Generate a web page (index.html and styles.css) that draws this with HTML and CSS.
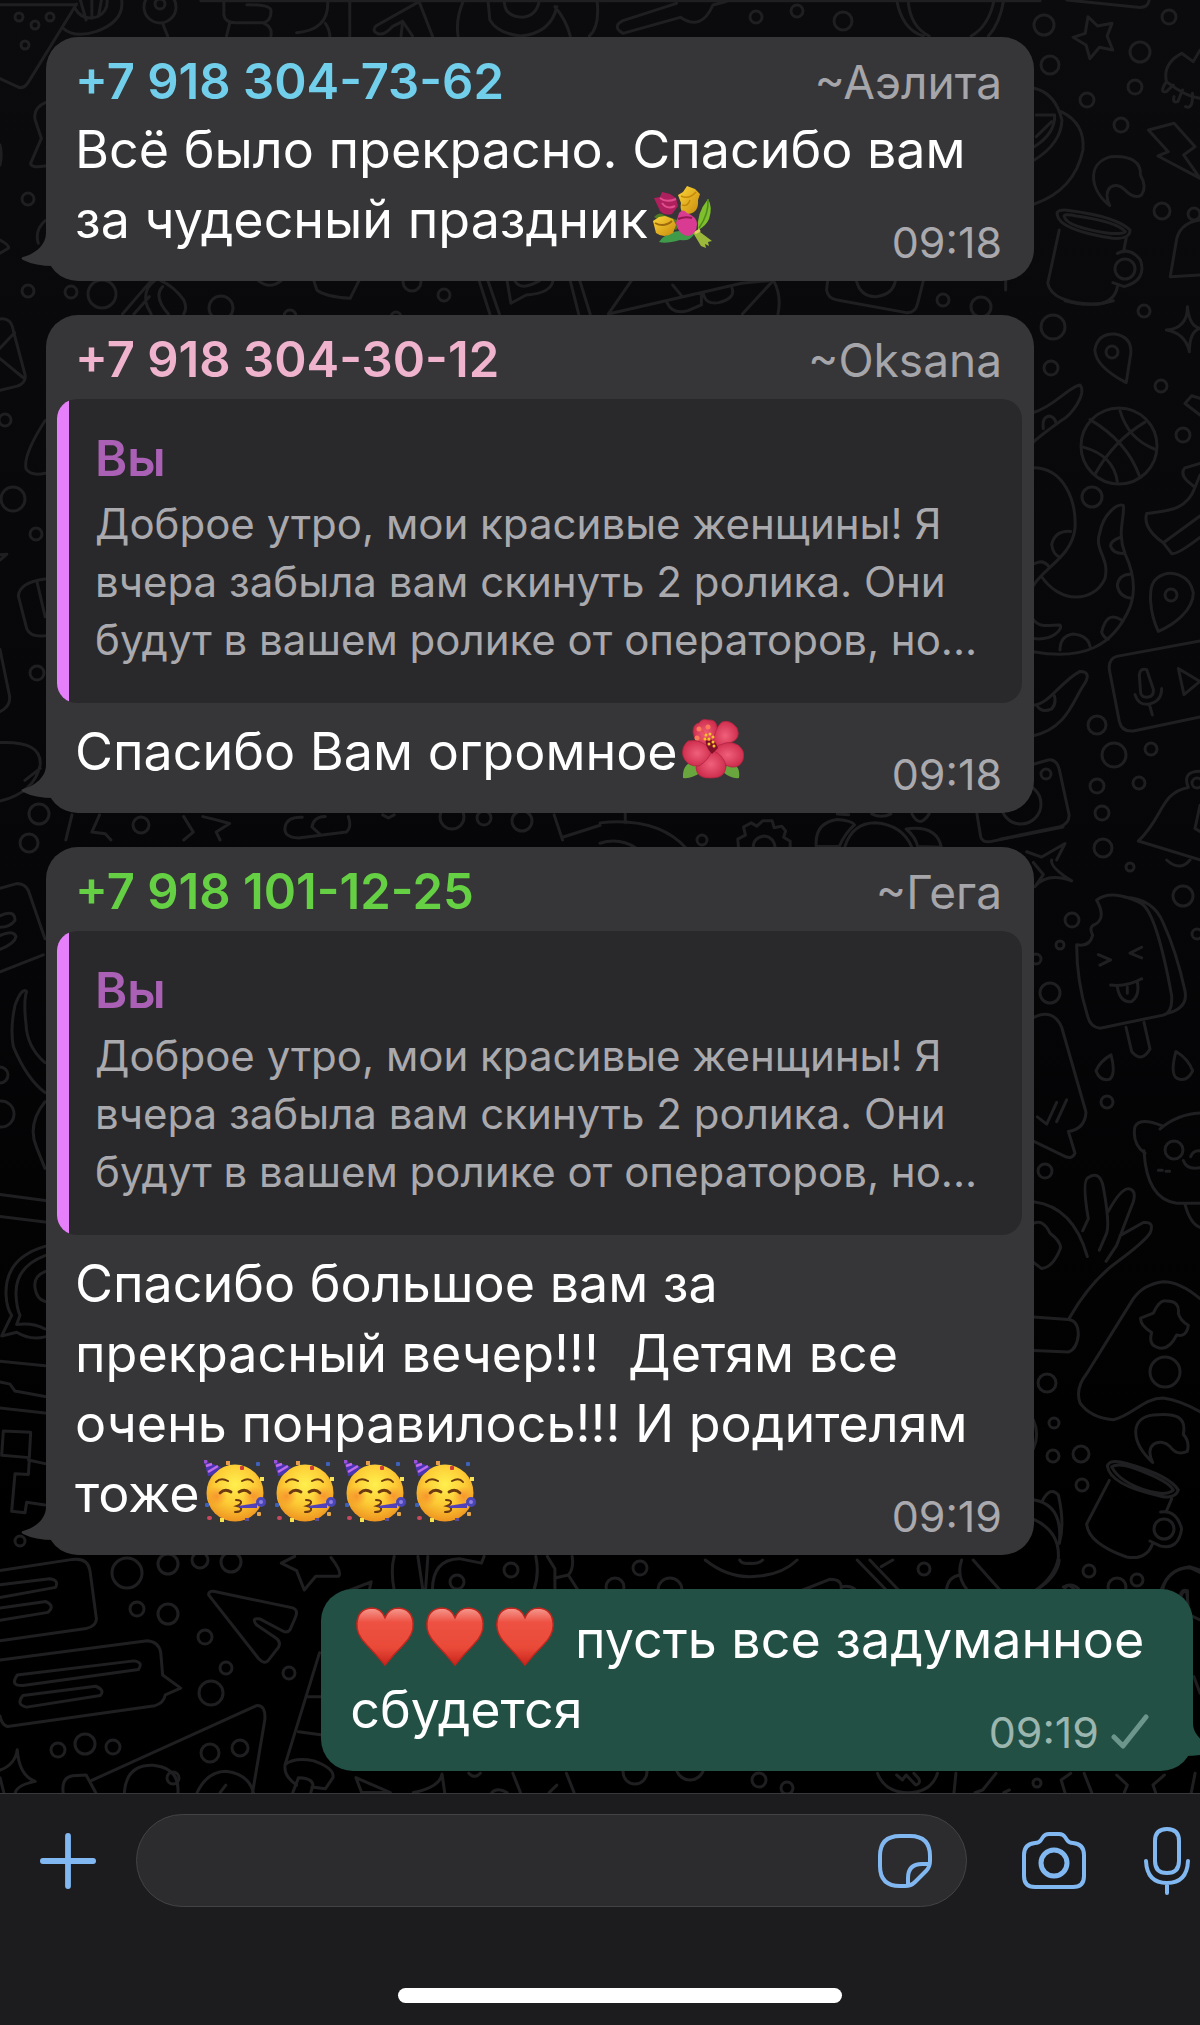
FILE: index.html
```html
<!DOCTYPE html>
<html lang="ru">
<head>
  <meta charset="UTF-8" />
  <meta name="viewport" content="width=device-width, initial-scale=1" />
  <title>Чат</title>
  <link rel="stylesheet" href="styles.css">
</head>
<body>
  <!-- shared emoji and bubble tail -->
  <svg class="defs" aria-hidden="true">
    <defs>
      <radialGradient id="face" cx="50%" cy="35%" r="65%">
        <stop offset="0" stop-color="#fff04e" />
        <stop offset="0.55" stop-color="#fdcb35" />
        <stop offset="1" stop-color="#ee9420" />
      </radialGradient>
      <radialGradient id="blush">
        <stop offset="0" stop-color="#f4752b" stop-opacity="0.6" />
        <stop offset="1" stop-color="#f4752b" stop-opacity="0" />
      </radialGradient>
      <linearGradient id="heart-fill" x1="0" y1="0" x2="0" y2="1">
        <stop offset="0" stop-color="#f59a90" />
        <stop offset="0.25" stop-color="#ee5142" />
        <stop offset="0.7" stop-color="#e94a38" />
        <stop offset="1" stop-color="#c9241c" />
      </linearGradient>
      <radialGradient id="petal">
        <stop offset="0" stop-color="#f0607a" />
        <stop offset="1" stop-color="#cf2f4e" />
      </radialGradient>
      <linearGradient id="yellow-rose" x1="0" y1="0" x2="1" y2="1">
        <stop offset="0" stop-color="#fbd53a" />
        <stop offset="1" stop-color="#c98a0c" />
      </linearGradient>
    </defs>
    <symbol id="tail" viewBox="0 0 33 34">
      <path d="M25 0C25 12 14 21 2 24Q-1 25 2 27Q14 33 33 33V0Z" />
    </symbol>
    <symbol id="party" viewBox="0 0 62 62">
      <circle cx="31" cy="33" r="28.5" fill="url(#face)" />
      <circle cx="13" cy="36" r="10" fill="url(#blush)" />
      <circle cx="49" cy="36" r="10" fill="url(#blush)" />
      <path d="M0 1L4 16Q10 16 17 7Z" fill="#4a35b5" />
      <path d="M2 6L8 4M4 12L14 6" stroke="#c06be8" stroke-width="2.4" />
      <circle cx="1.5" cy="1.5" r="2" fill="#9b4fd6" />
      <g fill="none" stroke="#6b3a10" stroke-width="2" stroke-linecap="round">
        <path d="M12 22Q17 17 24 21" />
        <path d="M38 21Q45 17 49 22" />
        <path d="M16 33Q21 28 27 32M35 32Q41 28 46 33" stroke-width="2.8" />
        <path d="M32 40Q38 40 37 43Q36 45 33 46Q38 47 37 50Q36 52 31 52" />
      </g>
      <path d="M34 46L53 43V48L36 48Z" fill="#5240b8" />
      <circle cx="57" cy="42" r="3.5" fill="#8f7fe0" stroke="#4b46b8" stroke-width="3" />
      <rect x="22" y="1" width="4" height="4" fill="#e89b4a" />
      <rect x="36" y="6" width="4" height="4" rx="1" fill="#d23d3a" />
      <rect x="52" y="2" width="4" height="4" rx="1" fill="#3e62b8" />
      <rect x="56" y="17" width="4" height="4" fill="#f7e35a" />
      <rect x="1" y="43" width="4" height="4" rx="1" fill="#3e62b8" />
      <rect x="3" y="56" width="5" height="4" rx="2" fill="#c9475f" />
      <rect x="16" y="58" width="4" height="4" fill="#f5e24e" />
      <rect x="41" y="58" width="4" height="3" fill="#5a4a9a" />
      <rect x="53" y="52" width="4" height="4" rx="1" fill="#e3a64a" />
    </symbol>
    <symbol id="heart" viewBox="-1 -1 64 64">
      <path d="M31 60Q22 49 12 39Q1 28 2 17Q3 2 17 1Q27 1 31 11Q35 1 45 1Q59 2 60 17Q61 28 50 39Q40 49 31 60Z" fill="url(#heart-fill)" stroke="#c0261e" stroke-width="1.5" />
    </symbol>
    <symbol id="hibiscus" viewBox="0 0 62 62">
      <path d="M1 60Q0 43 16 44L19 54Q10 61 1 60ZM57 60Q59 46 46 45L41 54Q49 61 57 60Z" fill="#6aa63e" />
      <g fill="url(#petal)" stroke="#b32342" stroke-width="0.8">
        <path d="M30 30Q12 27 11 14Q11 6 17 5Q20 0 26 2Q34 1 35 9Q37 20 30 30Z" />
        <path d="M30 32Q32 10 40 4Q48 1 55 10Q59 20 50 24Q40 27 30 32Z" />
        <path d="M30 32Q45 20 56 27Q64 33 61 42Q58 50 49 49Q36 46 30 32Z" />
        <path d="M30 32Q43 38 44 49Q43 60 30 60Q15 61 14 50Q15 39 30 32Z" />
        <path d="M30 32Q27 42 17 48Q5 49 1 38Q-1 29 6 23Q18 20 30 32Z" />
      </g>
      <path d="M30 36Q22 28 24 20Q34 22 36 30Z" fill="#7f1029" />
      <path d="M20 12L27 22L15 20" stroke="#e5544a" stroke-width="1.5" fill="none" />
      <g fill="#f6c22c">
        <circle cx="24" cy="17" r="1.5" /><circle cx="28" cy="16" r="1.5" /><circle cx="31" cy="19" r="1.5" />
        <circle cx="23" cy="21" r="1.5" /><circle cx="27" cy="21" r="1.5" /><circle cx="31" cy="24" r="1.5" />
        <circle cx="27" cy="26" r="1.5" /><circle cx="32" cy="28" r="1.5" />
      </g>
      <g fill="#fa7a5c"><circle cx="17" cy="11" r="2.5" /><circle cx="26" cy="9" r="2.5" /><circle cx="15" cy="20" r="2.5" /></g>
    </symbol>
    <symbol id="bouquet" viewBox="0 0 62 62">
      <path d="M56 13Q61 21 57 33Q54 40 46 44Q44 28 56 13Z" fill="#7fbf2b" />
      <path d="M56 13Q57 28 47 42" stroke="#4d8a1f" stroke-width="1.5" fill="none" />
      <path d="M7 56Q14 46 27 45L43 47Q38 56 28 54Q14 58 7 56Z" fill="#3f9a4a" />
      <path d="M2 31Q7 25 12 29L30 36L24 44Z" fill="#4e7a22" />
      <path d="M40 45L48 46L60 55L56 56L57 60L53 58L54 62L49 60Z" fill="#9bb83a" />
      <path d="M43 47L48 44" stroke="#e3d35e" stroke-width="3" />
      <path d="M2 12L8 11L10 6L18 8L24 12L26 20L20 28Q12 30 8 25Z" fill="#ae1f5e" />
      <path d="M8 12Q14 17 24 13M10 17Q15 24 23 20" stroke="#e04e8c" stroke-width="2" fill="none" />
      <path d="M26 9L31 6L35 0L43 3L48 8L46 14Q47 27 36 28Q27 28 29 17Z" fill="url(#yellow-rose)" />
      <path d="M29 10Q37 14 44 6M30 19Q36 21 38 14" stroke="#c4880a" stroke-width="1.5" fill="none" />
      <path d="M1 35L7 31L13 30L21 33L24 39L21 47Q12 53 4 47Z" fill="url(#yellow-rose)" />
      <path d="M3 37Q12 42 20 35" stroke="#9d6a0c" stroke-width="2" fill="none" />
      <path d="M27 27Q31 22 35 27Q45 31 45 38Q45 48 36 50Q26 49 24 37Z" fill="#d93b92" />
      <path d="M26 33Q33 30 40 32" stroke="#92184f" stroke-width="2" fill="none" />
    </symbol>
  </svg>

  <main class="chat">
    <!-- wallpaper: groups are drawn tile by tile, each in its own scale -->
    <svg class="wallpaper" viewBox="0 0 1200 1793" preserveAspectRatio="xMidYMin slice" aria-hidden="true">
      <g>
        <circle cx="19" cy="17" r="4" /><circle cx="35" cy="25" r="4" /><circle cx="50" cy="17" r="4" /><circle cx="25" cy="45" r="4" />
        <circle cx="160" cy="4" r="5" /><circle cx="160" cy="7" r="16" /><circle cx="28" cy="199" r="6" /><circle cx="28" cy="291" r="6" />
        <circle cx="71" cy="292" r="6" /><circle cx="102" cy="294" r="14" /><circle cx="221" cy="308" r="12" /><circle cx="444" cy="295" r="6" />
        <circle cx="290" cy="316" r="6" /><circle cx="396" cy="317" r="5" /><circle cx="412" cy="282" r="9" /><circle cx="756" cy="17" r="6" />
        <circle cx="797" cy="11" r="6" /><circle cx="843" cy="21" r="9" /><circle cx="1044" cy="25" r="10" /><circle cx="1050" cy="65" r="9" />
        <circle cx="1140" cy="52" r="10" /><circle cx="1135" cy="87" r="7" /><circle cx="1169" cy="17" r="7" /><circle cx="1087" cy="100" r="7" />
        <circle cx="1121" cy="125" r="7" /><circle cx="1162" cy="211" r="8" /><circle cx="1194" cy="214" r="6" /><circle cx="1144" cy="311" r="6" />
        <circle cx="1053" cy="327" r="12" /><circle cx="943" cy="300" r="6" /><circle cx="981" cy="307" r="10" /><circle cx="1051" cy="368" r="7" />
        <circle cx="1161" cy="386" r="6" /><circle cx="1112" cy="352" r="6" /><circle cx="1125" cy="269" r="10" />
        <circle cx="1092" cy="497" r="10" /><circle cx="1183" cy="435" r="7" /><circle cx="1171" cy="595" r="6" /><circle cx="1097" cy="725" r="9" />
        <circle cx="1114" cy="755" r="12" /><circle cx="1151" cy="749" r="6" /><circle cx="1139" cy="783" r="6" /><circle cx="1097" cy="786" r="7" />
        <circle cx="1102" cy="813" r="7" /><circle cx="1103" cy="848" r="9" /><circle cx="1119" cy="446" r="38" /><circle cx="1046" cy="774" r="5" />
        <circle cx="1021" cy="804" r="20" /><circle cx="1197" cy="783" r="5" /><circle cx="1072" cy="920" r="7" /><circle cx="1060" cy="945" r="4" />
        <circle cx="1130" cy="867" r="4" /><circle cx="1183" cy="896" r="10" /><circle cx="1197" cy="934" r="5" /><circle cx="1050" cy="993" r="10" />
        <circle cx="1036" cy="959" r="5" /><circle cx="1107" cy="1102" r="6" /><circle cx="1045" cy="1171" r="7" /><circle cx="1047" cy="1383" r="9" />
        <circle cx="1054" cy="1423" r="5" /><circle cx="1081" cy="1454" r="8" /><circle cx="1053" cy="1456" r="6" /><circle cx="1082" cy="1485" r="6" />
        <circle cx="1165" cy="1372" r="15" /><circle cx="1164" cy="1529" r="10" /><circle cx="1089" cy="1571" r="6" /><circle cx="1137" cy="1580" r="6" />
        <circle cx="1117" cy="1587" r="9" /><circle cx="1174" cy="1150" r="9" /><circle cx="5" cy="420" r="6" /><circle cx="13" cy="499" r="12" />
        <circle cx="36" cy="534" r="6" /><circle cx="37" cy="673" r="7" /><circle cx="39" cy="814" r="10" /><circle cx="141" cy="825" r="8" />
        <circle cx="452" cy="817" r="12" /><circle cx="484" cy="818" r="7" /><circle cx="522" cy="821" r="10" /><circle cx="29" cy="843" r="9" />
        <circle cx="702" cy="840" r="5" /><circle cx="0" cy="1075" r="8" /><circle cx="1" cy="1114" r="13" /><circle cx="20" cy="1541" r="5" />
        <circle cx="127" cy="1573" r="15" /><circle cx="168" cy="1564" r="10" /><circle cx="200" cy="1560" r="8" /><circle cx="231" cy="1562" r="10" />
        <circle cx="137" cy="1609" r="7" /><circle cx="168" cy="1614" r="10" /><circle cx="205" cy="1637" r="7" /><circle cx="226" cy="1668" r="6" />
        <circle cx="211" cy="1693" r="12" /><circle cx="289" cy="1673" r="6" /><circle cx="58" cy="1750" r="7" /><circle cx="85" cy="1744" r="10" />
        <circle cx="113" cy="1747" r="7" /><circle cx="210" cy="1753" r="9" /><circle cx="240" cy="1748" r="8" /><circle cx="457" cy="1582" r="7" />
        <circle cx="511" cy="1570" r="7" /><circle cx="173" cy="1778" r="6" /><circle cx="640" cy="1568" r="7" /><circle cx="615" cy="1587" r="9" />
        <circle cx="670" cy="1590" r="12" /><circle cx="924" cy="1569" r="6" /><circle cx="1037" cy="1783" r="4" /><circle cx="759" cy="1780" r="7" />
        <circle cx="787" cy="1788" r="6" /><circle cx="635" cy="1772" r="12" /><circle cx="690" cy="1766" r="14" />
      </g>
      <g transform="scale(0.3827 0.3333)">
        <path d="M0 14H198M200 12L75 245Q62 270 45 260L0 236M196 25Q215 65 255 50Q282 35 280 0M210 0L225 60M240 0L240 55M265 0L258 45M165 85Q195 115 250 95Q325 65 318 0" />
        <path d="M425 70L438 108M585 0V45Q588 68 615 68H690Q710 60 708 30Q705 14 645 14M600 70L592 108M690 70Q712 80 708 108M856 0Q862 90 775 98M914 0V108M850 70Q860 85 862 108M1095 5L982 78Q970 95 990 102Q1005 105 1025 80L1052 64L1048 108M1052 64L1078 108M1095 5L1130 108M1210 5Q1190 60 1197 108M1275 0L1280 60Q1300 100 1360 108Q1440 100 1455 20M1318 8Q1320 50 1365 52Q1400 48 1408 8M1450 20Q1480 60 1490 108M1540 108Q1568 80 1560 0M525 2H1568" />
        <path d="M118 308Q85 325 92 360L108 415L80 490Q80 505 118 498M0 435Q6 465 0 495M118 662Q90 690 100 730M0 720Q25 735 22 745L0 760" />
        <path d="M395 842L320 942M350 942L390 890M405 842Q370 870 385 920L395 942M420 842Q455 860 480 900Q490 925 480 942M425 860Q400 890 440 942M675 842Q705 870 735 842M820 842L828 870Q850 890 915 895L938 842M1252 842L1280 942M1275 842L1305 942M1325 842L1335 910L1375 885Q1440 880 1445 842M1490 842L1512 942M1515 842L1542 942M1345 842Q1360 875 1410 842" />
      </g>
      <g transform="translate(600 0) scale(0.3827 0.3333)">
        <path d="M0 2H1150M1220 0L1405 22Q1432 25 1435 0M200 10L60 62Q30 80 60 100L210 52Q265 95 295 15L330 5M775 0Q790 90 845 108M805 0Q810 80 860 108M1030 0Q1015 80 970 108M1055 0Q1045 70 1015 108" />
        <path d="M1275 50L1300 78L1338 70L1325 108L1340 150L1305 142L1280 176L1270 135L1236 112L1268 100Z" />
        <path d="M1568 150L1550 185L1520 160Q1470 190 1480 245Q1530 290 1568 295M1480 245Q1460 280 1480 275L1498 255M1500 290Q1495 310 1510 305L1522 270M1530 320Q1550 330 1548 280" />
        <path d="M1433 390L1500 370L1555 440L1525 465L1568 535L1458 468L1485 455Z" />
        <path d="M1135 265Q1190 280 1207 360Q1205 430 1135 480M1140 345H1188Q1190 400 1135 440M1205 335Q1268 370 1262 450Q1240 570 1135 612M1140 410L1180 365" />
        <path d="M1332 617C1280 570 1270 490 1335 470C1390 465 1415 490 1412 525Q1430 560 1415 585Q1395 600 1370 568C1345 540 1310 565 1332 617Z" />
        <path d="M1195 645Q1190 625 1230 632Q1350 650 1385 690Q1385 718 1340 715Q1200 690 1195 645ZM1213 650Q1210 640 1245 648Q1350 665 1373 695Q1360 705 1320 698Q1220 680 1213 650ZM1200 690L1170 850Q1180 910 1300 913Q1345 905 1352 860M1375 715L1368 755M1352 760Q1385 740 1412 780Q1430 840 1370 860L1340 848" />
        <path d="M1568 660Q1510 670 1505 730L1490 830L1568 825M1480 990Q1535 985 1535 920M1480 990Q1530 1000 1540 1055M1568 985Q1540 995 1540 1055M1535 920Q1540 980 1568 985" />
        <path d="M1375 1148Q1295 1100 1293 1050Q1300 1000 1345 1002Q1390 1010 1387 1060Z" />
        <path d="M82 842L22 942L370 850L440 842M190 855L215 890M175 908Q190 945 230 932L265 915V885M270 880Q275 915 310 908Q355 895 345 865M450 845L372 942M455 845Q475 890 465 942M595 842L592 870Q595 895 620 900L800 938Q825 940 830 910L845 842M670 842Q680 890 720 890Q765 885 772 842M1060 842V870" />
      </g>
      <g transform="translate(1000 300) scale(0.3333 0.3571)">
        <path d="M195 2Q270 22 340 2M270 335Q380 395 418 492M360 310Q385 390 465 418M435 342Q340 395 285 488M250 412Q340 435 352 508M100 315C160 300 210 240 240 238C260 260 220 320 180 340C150 360 120 380 100 398M130 360Q125 328 148 325Q165 328 168 345" />
        <path d="M100 470C190 470 230 560 225 640C215 720 130 750 100 800M125 775C180 850 280 850 315 780C330 720 280 700 300 650C310 600 350 570 370 575C375 610 350 650 375 710C400 760 410 810 390 860C340 970 250 1010 100 985M212 648Q165 645 155 685Q160 715 180 720M105 738Q130 725 148 748M360 665Q330 675 332 690Q340 710 368 710M390 768Q355 770 352 800Q358 832 395 835M362 895Q320 870 305 930Q310 945 325 950M180 980Q180 940 220 935Q265 940 270 970M100 895C120 920 150 910 180 910C190 920 160 955 100 948" />
        <path d="M600 458L555 470Q540 485 560 505L585 525L600 490M585 525C560 590 500 590 440 598C430 630 460 660 490 680L515 710Q530 715 600 665M490 680L600 605M600 275L575 268L555 290L600 322" />
        <path d="M475 928C450 880 440 800 470 780C510 750 570 770 580 820C580 870 520 910 475 928ZM600 955L350 998Q325 1005 328 1035L358 1180Q365 1210 400 1207L600 1168M418 1050Q420 1030 440 1035L460 1090Q462 1110 445 1112Q425 1115 422 1100ZM405 1105Q415 1135 445 1132Q485 1125 485 1088M448 1132L457 1162M535 1032L552 1105L600 1068Z" />
        <path d="M100 1135C150 1130 180 1070 240 1040C270 1040 265 1060 250 1080C220 1120 200 1200 100 1220M110 1135Q125 1158 155 1145Q170 1130 163 1108M100 1300L145 1288Q170 1285 178 1315L207 1440Q210 1465 180 1475L0 1510M565 1365Q545 1320 600 1320M565 1365C480 1380 490 1450 415 1515L600 1568M600 1415L585 1480L600 1488M80 1545L125 1560L195 1522L170 1568" />
      </g>
      <g transform="translate(1000 860) scale(0.3333 0.4847)">
        <path d="M105 55L130 30L100 5M105 55Q140 25 215 43Q150 15 155 0M290 83C330 60 400 80 425 90Q470 110 515 280Q518 315 490 320L300 347Q270 345 262 320Q230 250 230 175Q270 180 278 155Q265 138 285 133Q320 120 290 83ZM375 77Q460 80 490 130Q530 190 555 270Q565 305 505 316M295 195L332 206L300 217M425 180L390 192L425 202M332 258Q380 262 425 245M352 262Q360 295 395 292Q420 280 412 252M382 262V275M378 345L395 395Q425 420 450 390L432 335" />
        <path d="M333 402Q300 415 288 435Q300 458 330 452Q348 440 333 402ZM528 395Q510 440 530 450Q560 460 578 435Q565 410 528 395ZM100 325Q160 305 185 345L258 520Q255 555 205 560L225 605Q215 620 190 610L100 580M112 530L140 545L170 500M170 540L200 495" />
        <path d="M600 522Q530 525 480 555M485 548Q420 530 405 550Q395 585 435 605M432 600Q440 700 530 708H600M550 620Q560 640 600 635M572 612Q580 598 600 600M555 710Q570 750 600 758M475 640H487M498 642H509" />
        <path d="M100 705Q220 715 262 818M248 765L265 740Q245 660 265 655Q300 640 310 675Q330 750 320 770L298 805M325 725Q360 680 385 678Q410 680 400 705Q380 740 350 795L318 828M360 775L430 748Q465 745 450 770Q430 790 350 830Q270 870 208 945M100 750Q130 740 150 770Q180 785 182 800Q160 840 125 843L100 830M100 943L205 948Q235 950 235 980Q230 1010 205 1015L100 1012" />
        <path d="M600 905Q540 870 490 870Q430 875 400 905L260 1060Q225 1090 240 1120Q270 1150 340 1155C400 1145 430 1110 490 1110Q540 1115 600 1138M422 945L460 935Q480 905 500 910Q540 910 535 935Q540 950 565 960Q560 985 530 980Q505 1015 470 1005Q445 1000 455 975Q420 960 422 945Z" />
        <path d="M458 1243C390 1200 390 1150 460 1145C530 1140 560 1150 550 1185Q570 1200 562 1220Q530 1230 510 1210C480 1190 430 1205 458 1243ZM322 1250Q330 1235 380 1245Q510 1270 535 1300Q525 1320 480 1312Q330 1290 322 1250ZM335 1252Q360 1240 440 1265Q510 1285 520 1300Q500 1312 450 1303Q360 1285 335 1252ZM328 1280L260 1370Q265 1410 380 1438Q440 1445 458 1410M515 1318L500 1342M482 1345Q530 1340 545 1380Q535 1425 480 1415L450 1405" />
        <path d="M100 1155Q120 1185 100 1215M125 1325Q150 1290 175 1310Q195 1370 178 1410M100 1320Q190 1330 178 1410M100 1360Q180 1385 175 1440Q165 1480 100 1510M190 1500Q215 1490 235 1503M485 1503Q510 1460 570 1460L600 1470M540 1530Q545 1505 560 1510L565 1540M500 0Q540 25 570 0" />
      </g>
      <g transform="translate(0 300) scale(0.3827 0.3444)">
        <path d="M0 55Q30 50 35 90L65 215Q70 240 45 250L0 262M38 95L0 140M0 170L60 225M118 350Q60 450 68 490Q80 512 118 503M0 740L18 738L0 755M118 810Q50 820 48 860L70 955Q80 980 118 975M97 820L118 920M0 1015L25 1150Q28 1180 0 1195M0 1285Q110 1280 105 1350Q90 1430 0 1455M65 1395L105 1360" />
        <path d="M188 1495L172 1568M260 1495L240 1545L275 1550L290 1568M480 1500L505 1545L480 1568M530 1500L560 1508L600 1520L565 1545L575 1568M745 1530Q750 1500 790 1502M745 1530Q740 1560 780 1562L905 1545Q920 1530 910 1500M815 1530Q820 1500 850 1500M815 1530L835 1550M1000 1495L1015 1504L1030 1495M1448 1495L1470 1568M1470 1560L1568 1525" />
      </g>
      <g transform="translate(600 680) scale(0.3827 0.4082)">
        <path d="M0 350Q150 335 225 412M0 400Q50 385 95 412M66 325V350M362 412L360 390L380 380L375 360L395 350L410 358L425 345L450 345L455 362L475 358L485 370L480 385L497 395V412M400 412Q400 385 430 382Q455 385 458 412M565 408Q560 350 620 342Q660 345 665 355Q640 375 625 408L565 408M640 408Q660 350 720 350Q790 355 815 410M800 365Q880 355 892 410L830 408Q825 385 800 365M620 328L650 330M710 328Q735 340 760 328M815 328Q835 365 860 328M985 328L995 385Q1000 398 1020 396L1210 360" />
      </g>
      <g transform="translate(0 840) scale(0.3333 0.4592)">
        <path d="M0 105L50 95Q75 95 85 110L135 215M0 165Q45 150 45 175Q30 190 0 190M0 208Q40 195 48 210Q45 225 0 238M0 287L130 250M135 485Q80 450 78 400Q70 350 80 330Q65 320 45 360Q30 410 40 450Q80 520 135 550M135 570Q80 620 110 670L135 715M0 772L135 785M0 820L135 832M135 885Q15 910 18 990Q20 1020 35 1035L5 1080L50 1072Q90 1090 135 1082M135 905Q45 930 48 990Q50 1020 60 1035L50 1055Q100 1050 135 1065M135 940Q100 950 105 975Q110 1000 135 1005M0 1135L135 1145M0 1180L30 1185L45 1200L135 1212M0 1237L135 1248M10 1287L92 1290L88 1345L5 1340ZM85 1350L135 1358M88 1350L85 1382L45 1380L35 1462L75 1465L80 1442L135 1448" />
      </g>
      <g transform="translate(0 1440) scale(0.3827 0.3731)">
        <path d="M0 350L190 320Q230 315 235 350L252 480Q250 500 225 505L0 538M0 388L130 372Q155 375 145 395L0 422M0 450L120 433Q145 445 125 462L0 483M0 590L385 538Q415 540 420 570L425 630L472 665L432 683Q428 705 405 712L20 768Q5 765 0 740M45 630L350 592Q375 595 362 615L60 658Q25 660 45 630ZM60 685L250 660Q275 670 262 685L70 716Q40 710 60 685ZM545 415Q545 400 570 408L765 450Q780 455 772 475L758 508Q750 520 735 510L680 480Q655 475 670 495L720 530Q735 540 728 555L700 592Q690 602 675 585Z" />
        <path d="M735 330L775 350L795 402L825 365L885 365Q895 355 865 315M735 330L770 312M1030 312Q1020 350 1030 402M1092 312L1105 402M1118 312L1112 402M1130 402Q1130 320 1200 318L1258 330L1265 312M1400 312Q1410 360 1395 402M1430 312L1450 345V402M1495 312Q1500 345 1485 362L1510 402M1485 362L1450 370M915 402L970 380L965 402" />
        <path d="M240 912L670 712Q695 710 692 750L660 945M165 945Q160 905 190 900L225 898L250 945M325 945Q330 870 400 872Q470 880 465 945M515 945Q540 890 590 888Q650 895 662 945M575 945L590 925M835 570L745 870Q740 900 775 925M805 688H838M780 782L838 790M745 870Q770 850 820 860Q875 880 870 905L850 935L815 930M765 945L780 905Q815 905 818 925L812 945M0 885Q40 870 45 830Q50 900 92 915Q45 925 40 945M0 905L10 945M930 905L945 945L1020 945ZM1080 945Q1150 930 1155 895L1162 945M1225 893Q1240 910 1255 893M1285 945Q1300 930 1325 945M1340 893L1360 945M1435 945L1455 925M1480 893L1500 945" />
      </g>
      <g transform="translate(600 1560) scale(0.3827 0.3333)">
        <path d="M275 0Q330 50 390 50Q470 50 515 0M365 0Q370 12 390 10Q415 12 425 0M530 90L600 58Q635 58 630 88M630 80Q655 75 668 90M672 0L748 90M705 0L780 90M735 20L765 0M905 90Q910 50 940 45M945 0Q930 50 960 90M975 0L1045 90M1200 0Q1195 50 1140 90M1215 85Q1225 65 1240 90M1470 90Q1480 30 1540 20L1568 30M1515 110Q1520 85 1535 92V125M1568 180L1550 170M1552 350L1568 400" />
        <path d="M725 640Q745 698 805 698Q865 698 882 640M775 645L790 660L800 645L825 675Q840 670 832 655L820 640M930 640L925 698M1035 640L1000 690L980 698M1055 698L1070 690M1230 640L1205 660L1215 698M1265 640L1285 698M1350 645L1378 675L1370 698M1475 645L1445 675L1452 698M1555 640L1545 698" />
      </g>
    </svg>

    <article class="bubble incoming">
      <header class="sender">
        <span class="phone blue">+7 918 304-73-62</span>
        <span class="name">~Аэлита</span>
      </header>
      <p class="text">Всё было прекрасно. Спасибо вам<br>за чудесный праздник<svg class="emoji" role="img" aria-label="букет"><use href="#bouquet" /></svg></p>
      <time class="time">09:18</time>
      <svg class="tail" aria-hidden="true"><use href="#tail" /></svg>
    </article>

    <article class="bubble incoming">
      <header class="sender">
        <span class="phone pink">+7 918 304-30-12</span>
        <span class="name">~Oksana</span>
      </header>
      <blockquote class="quote">
        <strong class="quote-author">Вы</strong>
        <p class="quote-text">Доброе утро, мои красивые женщины! Я<br>вчера забыла вам скинуть 2 ролика. Они<br>будут в вашем ролике от операторов, но...</p>
      </blockquote>
      <p class="text">Спасибо Вам огромное<svg class="emoji" role="img" aria-label="гибискус"><use href="#hibiscus" /></svg></p>
      <time class="time">09:18</time>
      <svg class="tail" aria-hidden="true"><use href="#tail" /></svg>
    </article>

    <article class="bubble incoming">
      <header class="sender">
        <span class="phone green">+7 918 101-12-25</span>
        <span class="name">~Гега</span>
      </header>
      <blockquote class="quote">
        <strong class="quote-author">Вы</strong>
        <p class="quote-text">Доброе утро, мои красивые женщины! Я<br>вчера забыла вам скинуть 2 ролика. Они<br>будут в вашем ролике от операторов, но...</p>
      </blockquote>
      <p class="text">Спасибо большое вам за<br>прекрасный вечер!!!&nbsp; Детям все<br>очень понравилось!!! И родителям<br>тоже<svg class="emoji" role="img" aria-label="праздник"><use href="#party" /></svg><svg class="emoji" role="img" aria-label="праздник"><use href="#party" /></svg><svg class="emoji" role="img" aria-label="праздник"><use href="#party" /></svg><svg class="emoji" role="img" aria-label="праздник"><use href="#party" /></svg></p>
      <time class="time">09:19</time>
      <svg class="tail" aria-hidden="true"><use href="#tail" /></svg>
    </article>

    <article class="bubble outgoing">
      <p class="text"><svg class="emoji" role="img" aria-label="сердце"><use href="#heart" /></svg><svg class="emoji" role="img" aria-label="сердце"><use href="#heart" /></svg><svg class="emoji" role="img" aria-label="сердце"><use href="#heart" /></svg> пусть все задуманное<br>сбудется</p>
      <div class="status">
        <time class="time">09:19</time>
        <svg class="check" viewBox="0 0 38 36" role="img" aria-label="Отправлено"><path d="M3 23L12 32L35 3" /></svg>
      </div>
      <svg class="tail" aria-hidden="true"><use href="#tail" /></svg>
    </article>
  </main>

  <footer class="footer">
    <form class="composer">
      <button class="icon-btn plus" type="button" aria-label="Добавить">
        <svg viewBox="0 0 58 58"><path d="M29 3V55M3 29H55" stroke-width="6" /></svg>
      </button>
      <div class="field">
        <input class="field-input" type="text" aria-label="Сообщение">
        <button class="icon-btn sticker" type="button" aria-label="Стикеры">
          <svg viewBox="0 0 54 54"><path d="M22 2H32Q52 2 52 22V27Q52 33 48 37L37 48Q33 52 27 52H22Q2 52 2 32V22Q2 2 22 2ZM30 51V44Q30 30 44 30H51" stroke-width="4" /></svg>
        </button>
      </div>
      <button class="icon-btn camera" type="button" aria-label="Камера">
        <svg viewBox="0 0 64 58">
          <path d="M13 11Q17 11 19 8L21 5Q23 2 27 2H37Q41 2 43 5L45 8Q47 11 51 11Q62 12 62 23V44Q62 55 51 55H13Q2 55 2 44V23Q2 12 13 11Z" stroke-width="4" />
          <circle cx="32" cy="31" r="13" stroke-width="5" />
        </svg>
      </button>
      <button class="icon-btn mic" type="button" aria-label="Голосовое сообщение">
        <svg viewBox="0 0 46 68"><path d="M23 2Q35 2 35 14V34Q35 46 23 46Q11 46 11 34V14Q11 2 23 2ZM2 34Q3 56 23 56Q43 56 44 34M23 56V66" stroke-width="4" /></svg>
      </button>
    </form>
    <div class="home-bar"></div>
  </footer>
</body>
</html>
```
FILE: styles.css
```css
* {
  box-sizing: border-box;
}
body {
  margin: 0;
  min-height: 100vh;
  display: flex;
  flex-direction: column;
  background: #000;
  color: #fff;
  font-family: Inter, "Liberation Sans", sans-serif;
}
p {
  margin: 0;
}
.defs {
  position: absolute;
  width: 0;
  height: 0;
}

/* chat */
.chat {
  position: relative;
  flex: 1;
  display: flex;
  flex-direction: column;
  gap: 34px;
  padding: 37px 7px 22px 46px;
  overflow: hidden;
  background: linear-gradient(#0b0b0e, #060608 50%, #000 85%);
}
.wallpaper {
  position: absolute;
  inset: 0;
  width: 100%;
  height: 100%;
}
.wallpaper circle,
.wallpaper path {
  fill: none;
  stroke: #1f1f21;
  stroke-width: 3px;
  stroke-linecap: round;
  stroke-linejoin: round;
  vector-effect: non-scaling-stroke;
}
.bubble {
  position: relative;
  display: flex;
  flex-direction: column;
  padding: 16px 32px 16px 29px;
  border-radius: 32px;
  background: #363638;
  color: #363638;
}
.incoming {
  margin-right: 159px;
}
.outgoing {
  align-self: flex-end;
  width: 76%;
  padding-right: 44px;
  background: #225044;
  color: #225044;
}
.tail {
  position: absolute;
  left: -25px;
  bottom: 14px;
  width: 33px;
  height: 34px;
  fill: currentColor;
}
.outgoing .tail {
  left: auto;
  right: -25px;
  transform: scaleX(-1);
}
.sender {
  display: flex;
  justify-content: space-between;
  align-items: baseline;
  line-height: 58px;
}
.phone {
  font-size: 49px;
  font-weight: 600;
}
.blue {
  color: #72cfec;
}
.pink {
  color: #efb3cd;
}
.green {
  color: #65d043;
}
.name {
  font-size: 46px;
  color: #a5a5aa;
}
.text {
  font-size: 52px;
  line-height: 70px;
  color: #fff;
}
.sender + .text {
  margin-top: 4px;
}
.quote + .text {
  margin-top: 14px;
}
.emoji {
  width: 62px;
  height: 62px;
  margin: 0 4px;
  vertical-align: -10px;
}
.time {
  align-self: flex-end;
  margin-top: -36px;
  font-size: 43px;
  line-height: 46px;
  color: #a9a9ae;
}
.status {
  display: flex;
  justify-content: flex-end;
  align-items: center;
  gap: 12px;
  margin-top: -36px;
}
.status .time {
  margin-top: 0;
  color: #9bb5af;
}
.check {
  width: 38px;
  height: 36px;
  fill: none;
  stroke: #6c958b;
  stroke-width: 5;
  stroke-linecap: round;
  stroke-linejoin: round;
}

/* quoted message */
.quote {
  margin: 10px -20px 0 -18px;
  padding: 31px 12px 34px 38px;
  border-radius: 20px;
  background: linear-gradient(90deg, #e580fa 12px, #29292b 12px);
}
.quote-author {
  display: block;
  margin-bottom: 7px;
  font-size: 49px;
  font-weight: 600;
  line-height: 58px;
  color: #a960b5;
}
.quote-text {
  font-size: 42px;
  line-height: 58px;
  color: #a9a9ae;
}

/* bottom bar */
.footer {
  padding: 20px 0 22px 40px;
  border-top: 1px solid #38383a;
  background: #1c1c1e;
}
.composer {
  display: flex;
  align-items: center;
  padding-right: 10px;
}
.icon-btn {
  flex: none;
  padding: 0;
  border: none;
  background: none;
  cursor: pointer;
}
.icon-btn svg {
  display: block;
  width: 100%;
  fill: none;
  stroke: #82b8f2;
  stroke-linecap: round;
  stroke-linejoin: round;
}
.plus {
  width: 56px;
  margin-right: 40px;
}
.field {
  flex: 1;
  min-width: 0;
  display: flex;
  align-items: center;
  height: 93px;
  padding: 0 34px 0 40px;
  border: 1px solid #434345;
  border-radius: 47px;
  background: #2c2c2e;
}
.field-input {
  flex: 1;
  min-width: 0;
  border: none;
  outline: none;
  background: none;
  color: #fff;
  font: inherit;
  font-size: 48px;
}
.sticker {
  width: 54px;
}
.camera {
  width: 64px;
  margin: 0 58px 0 55px;
}
.mic {
  width: 46px;
}
.home-bar {
  width: 444px;
  height: 15px;
  margin: 81px auto 0;
  border-radius: 8px;
  background: #fff;
}
```
